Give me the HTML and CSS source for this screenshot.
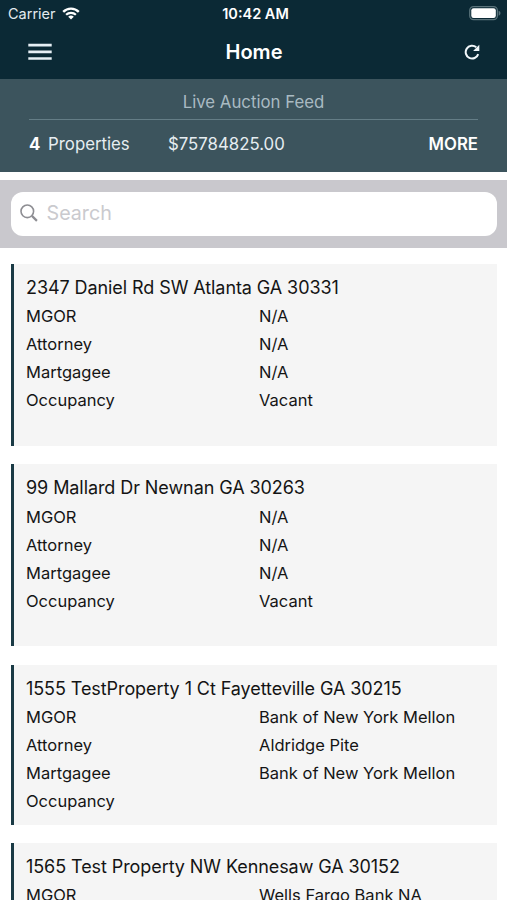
FILE: index.html
```html
<!DOCTYPE html>
<html lang="en">
<head>
  <meta charset="UTF-8">
  <title>Home</title>
  <meta name="viewport" content="width=device-width, initial-scale=1.0"/>
  <link rel="stylesheet" href="styles.css">
</head>
<body>
  <header class="header">
    <div class="status-bar">
      <div class="carrier">
        <span>Carrier</span>
        <svg class="wifi" viewBox="0 0 18 13" width="18" height="13">
          <path d="M1.2 4.8a11.2 11.2 0 0 1 15.6 0" fill="none" stroke="#fff" stroke-width="2.4"/>
          <path d="M4.1 7.8a7 7 0 0 1 9.8 0" fill="none" stroke="#fff" stroke-width="2.2"/>
          <path d="M6.2 9.8a4 4 0 0 1 5.6 0L9 12.6z" fill="#fff"/>
        </svg>
      </div>
      <div class="time">10:42 AM</div>
      <svg class="battery" viewBox="0 0 33 15" width="32" height="14.5">
        <rect x="0.7" y="0.7" width="28.6" height="13.4" rx="4" fill="none" stroke="#5a737b" stroke-width="1.3"/>
        <rect x="2.3" y="2.3" width="25.4" height="10.2" rx="2.4" fill="#fff"/>
        <path d="M30.6 5v5c1.5-.6 1.9-1.5 1.9-2.5s-.4-1.9-1.9-2.5z" fill="#5a737b"/>
      </svg>
    </div>
    <div class="nav-bar">
      <svg class="menu-icon" viewBox="0 0 24 18" width="24" height="18">
        <path d="M.3 2.2h23.4M.3 8.9h23.4M.3 15.5h23.4" stroke="#e6eff5" stroke-width="2.7"/>
      </svg>
      <h1>Home</h1>
      <svg class="refresh-icon" viewBox="0 0 16 16" width="16" height="16">
        <path d="M14.2 10.1A6.4 6.4 0 1 1 12.3 3.3" fill="none" stroke="#f2f8fb" stroke-width="2"/>
        <path d="M15.3.8v6.2H9.1z" fill="#f2f8fb"/>
      </svg>
    </div>
  </header>

  <section class="feed">
    <div class="feed-title">Live Auction Feed</div>
    <div class="feed-row">
      <span class="count"><b>4</b> Properties</span>
      <span class="amount">$75784825.00</span>
      <span class="more">MORE</span>
    </div>
  </section>

  <div class="search-bar">
    <div class="search-box">
      <svg viewBox="0 0 18 18" width="18" height="18">
        <circle cx="7.3" cy="7.3" r="6.3" fill="none" stroke="#8e8e93" stroke-width="1.6"/>
        <path d="M11.9 11.9l5 5" stroke="#8e8e93" stroke-width="2.2"/>
      </svg>
      <span>Search</span>
    </div>
  </div>

  <main class="list">
    <div class="card">
      <h2>2347 Daniel Rd SW Atlanta GA 30331</h2>
      <dl>
        <dt>MGOR</dt><dd>N/A</dd>
        <dt>Attorney</dt><dd>N/A</dd>
        <dt>Martgagee</dt><dd>N/A</dd>
        <dt>Occupancy</dt><dd>Vacant</dd>
      </dl>
    </div>
    <div class="card">
      <h2>99 Mallard Dr Newnan GA 30263</h2>
      <dl>
        <dt>MGOR</dt><dd>N/A</dd>
        <dt>Attorney</dt><dd>N/A</dd>
        <dt>Martgagee</dt><dd>N/A</dd>
        <dt>Occupancy</dt><dd>Vacant</dd>
      </dl>
    </div>
    <div class="card short">
      <h2>1555 TestProperty 1 Ct Fayetteville GA 30215</h2>
      <dl>
        <dt>MGOR</dt><dd>Bank of New York Mellon</dd>
        <dt>Attorney</dt><dd>Aldridge Pite</dd>
        <dt>Martgagee</dt><dd>Bank of New York Mellon</dd>
        <dt>Occupancy</dt><dd></dd>
      </dl>
    </div>
    <div class="card">
      <h2>1565 Test Property NW Kennesaw GA 30152</h2>
      <dl>
        <dt>MGOR</dt><dd>Wells Fargo Bank NA</dd>
      </dl>
    </div>
  </main>
</body>
</html>
```

FILE: styles.css
```css
* {
  box-sizing: border-box;
}
body {
  margin: 0;
  height: 900px;
  overflow: hidden;
  background: #fff;
  color: #141414;
  font-family: Inter, 'Liberation Sans', sans-serif;
}
.header {
  height: 79px;
  background: #0b2935;
  color: #fff;
}
.status-bar {
  display: grid;
  grid-template-columns: 1fr auto 1fr;
  align-items: center;
  height: 27px;
  padding: 0 6px 0 8px;
}
.carrier {
  display: flex;
  align-items: center;
  gap: 6px;
  font-size: 14.5px;
  color: #e3ebef;
}
.time {
  padding-left: 2px;
  font-size: 14.5px;
  font-weight: 600;
}
.battery {
  justify-self: end;
}
.nav-bar {
  display: grid;
  grid-template-columns: 1fr auto 1fr;
  align-items: center;
  height: 50px;
  padding: 0 27px 0 28px;
}
h1 {
  margin: 0;
  font-size: 20px;
  font-weight: 600;
}
.refresh-icon {
  justify-self: end;
}
/* Auction summary */
.feed {
  height: 93px;
  padding: 0 29px;
  background: #3c545d;
  color: #e6edf1;
  font-size: 16.8px;
}
.feed-title {
  height: 41px;
  line-height: 46px;
  border-bottom: 1px solid #647d86;
  text-align: center;
  color: #a9bac2;
}
.feed-row {
  display: flex;
  line-height: 48px;
}
.count {
  width: 139px;
}
.count b {
  margin-right: 3px;
  color: #fff;
}
.more {
  margin-left: auto;
  font-weight: 600;
  color: #fff;
}
/* Search */
.search-bar {
  height: 68px;
  margin-top: 8px;
  padding: 12px 10px 12px 11px;
  background: #c9c8cd;
}
.search-box {
  display: flex;
  align-items: center;
  gap: 8.5px;
  height: 44px;
  padding: 0 9px 2px;
  border-radius: 12px;
  background: #fff;
  color: #cacace;
  font-size: 19.7px;
}
/* Property cards */
.list {
  display: flex;
  flex-direction: column;
  gap: 18.35px;
  padding: 16px 10px 0 11px;
}
.card {
  flex: none;
  height: 182px;
  padding: 10px 12px;
  border-left: 3px solid #1a3a45;
  background: #f5f5f5;
}
.card.short {
  height: 160px;
}
h2 {
  margin: 0;
  font-size: 18px;
  font-weight: 400;
  line-height: 28.2px;
  letter-spacing: -0.08px;
}
dl {
  display: grid;
  grid-template-columns: 233px 1fr;
  margin: 0;
  font-size: 16.5px;
  line-height: 28.1px;
}
dd {
  margin: 0;
}
```
